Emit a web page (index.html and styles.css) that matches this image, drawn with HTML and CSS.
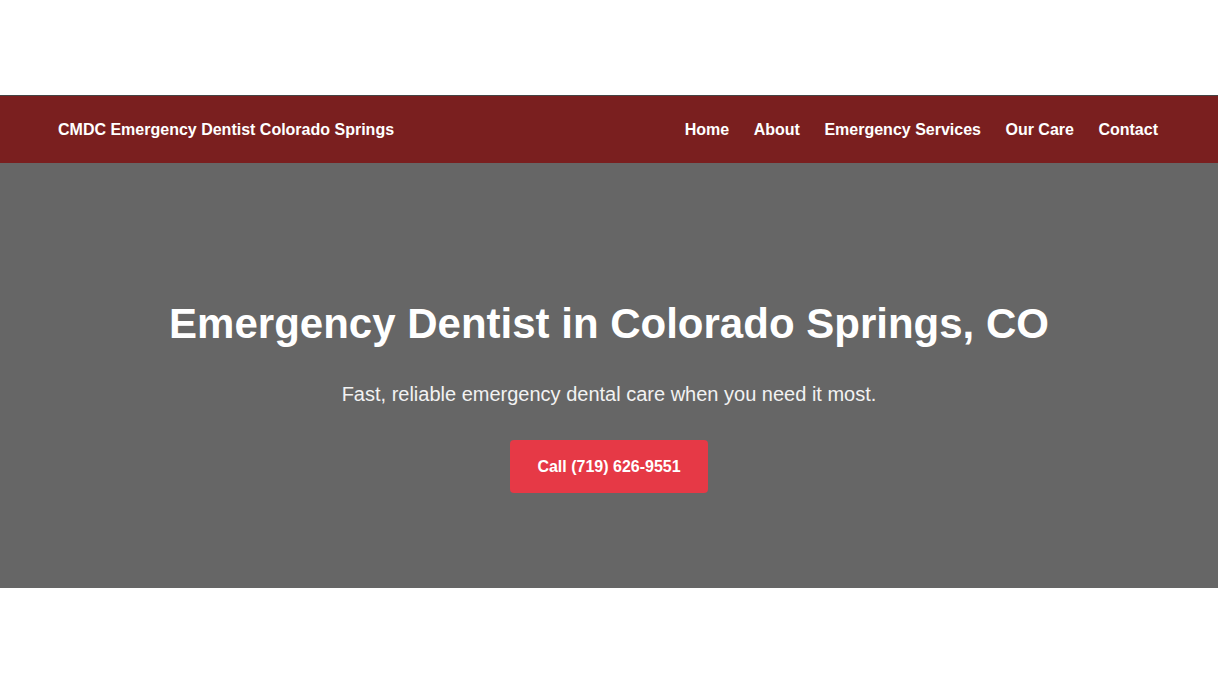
FILE: index.html
```html
<!DOCTYPE html>
<html lang="en">
<head>
<meta charset="utf-8">
<title>CMDC Emergency Dentist Colorado Springs</title>
<link rel="stylesheet" href="styles.css">
</head>
<body>
<div class="top-space"></div>
<header class="site-header">
  <div class="logo">CMDC Emergency Dentist Colorado Springs</div>
  <nav class="nav">
    <a href="#">Home</a>
    <a href="#">About</a>
    <a href="#">Emergency Services</a>
    <a href="#">Our Care</a>
    <a href="#">Contact</a>
  </nav>
</header>
<section class="hero">
  <h1 class="hero-title">Emergency Dentist in Colorado Springs, CO</h1>
  <p class="hero-text">Fast, reliable emergency dental care when you need it most.</p>
  <a class="btn" href="#">Call (719) 626-9551</a>
</section>
</body>
</html>
```
FILE: styles.css
```css
* { box-sizing: border-box; }
html, body { margin: 0; padding: 0; }
body {
  font-family: "Liberation Sans", Arial, sans-serif;
  background: #ffffff;
  color: #ffffff;
}
.top-space {
  height: 96px;
  border-bottom: 1px solid #444444;
}
.site-header {
  background: #7a1f1f;
  height: 67px;
  padding: 0 60px 0 58px;
  display: flex;
  align-items: center;
  justify-content: space-between;
}
.logo {
  font-size: 16px;
  font-weight: bold;
  line-height: 19px;
}
.nav {
  display: flex;
  gap: 24.5px;
}
.nav a {
  color: #ffffff;
  text-decoration: none;
  font-size: 16px;
  font-weight: bold;
  line-height: 19px;
}
.hero {
  background: #666666;
  height: 425px;
  display: flex;
  flex-direction: column;
  align-items: center;
  text-align: center;
  padding-top: 136px;
}
.hero-title {
  margin: 0;
  font-size: 42px;
  line-height: 50px;
  font-weight: bold;
}
.hero-text {
  margin: 33px 0 0;
  font-size: 20px;
  line-height: 24px;
  color: #f2f2f2;
}
.btn {
  margin-top: 34px;
  display: inline-block;
  background: #e63946;
  color: #ffffff;
  text-decoration: none;
  font-size: 16px;
  font-weight: bold;
  line-height: 19px;
  padding: 17px 27px;
  border-radius: 4px;
}
```
